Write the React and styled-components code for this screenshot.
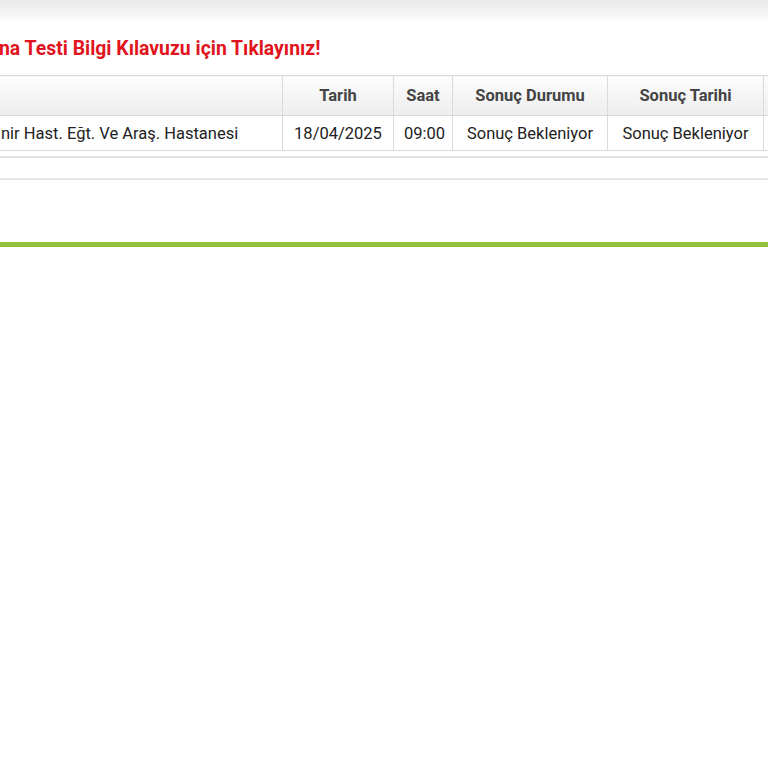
import React from "react";
import styled, { createGlobalStyle } from "styled-components";

const Global = createGlobalStyle`
  html, body { margin: 0; padding: 0; background: #fff; }
  body { font-family: Roboto, "Liberation Sans", sans-serif; overflow: hidden; }
`;

const Page = styled.div`
  width: 768px;
  height: 768px;
  overflow: hidden;
  background: #fff;
`;

const TopBar = styled.div`
  height: 22px;
  background: linear-gradient(#e9e9e9, #f6f6f6 70%, #fff);
`;

const Notice = styled.a`
  display: block;
  margin: 15px 0 0 -1px;
  font-size: 19.4px;
  line-height: 24px;
  font-weight: 700;
  color: #e1141d;
  text-decoration: none;
  white-space: nowrap;
`;

const TableBox = styled.div`
  margin-top: 14px;
  border-bottom: 2px solid #e2e2e2;
  padding-bottom: 5px;
`;

const Table = styled.table`
  border-collapse: collapse;
  table-layout: fixed;
  margin-left: -10px;
  width: 880px;
`;

const Th = styled.th`
  height: 39px;
  padding: 0 10px;
  border: 1.5px solid #dadada;
  background: linear-gradient(#fdfdfd, #ededed);
  color: #444;
  font-size: 16.5px;
  font-weight: 700;
  text-align: center;
  white-space: nowrap;
`;

const Td = styled.td`
  height: 34px;
  padding: 0 10px;
  border: 1.5px solid #dadada;
  color: #222;
  font-size: 16.5px;
  text-align: ${(p) => (p.$left ? "left" : "center")};
  white-space: nowrap;
  overflow: hidden;
`;

const Spacer = styled.div`
  height: 20px;
  border-bottom: 2px solid #e6e6e6;
`;

const GreenLine = styled.div`
  margin-top: 62px;
  height: 5px;
  background: #94c23d;
`;

const cols = [292, 111, 59, 155, 156, 107];

export default function App() {
  return (
    <Page>
      <Global />
      <TopBar />
      <Notice href="#">na Testi Bilgi Kılavuzu için Tıklayınız!</Notice>
      <TableBox>
        <Table>
          <colgroup>
            {cols.map((w, i) => (
              <col key={i} style={{ width: w }} />
            ))}
          </colgroup>
          <thead>
            <tr>
              <Th />
              <Th>Tarih</Th>
              <Th>Saat</Th>
              <Th>Sonuç Durumu</Th>
              <Th>Sonuç Tarihi</Th>
              <Th />
            </tr>
          </thead>
          <tbody>
            <tr>
              <Td $left>nir Hast. Eğt. Ve Araş. Hastanesi</Td>
              <Td>18/04/2025</Td>
              <Td>09:00</Td>
              <Td>Sonuç Bekleniyor</Td>
              <Td>Sonuç Bekleniyor</Td>
              <Td />
            </tr>
          </tbody>
        </Table>
      </TableBox>
      <Spacer />
      <GreenLine />
    </Page>
  );
}
